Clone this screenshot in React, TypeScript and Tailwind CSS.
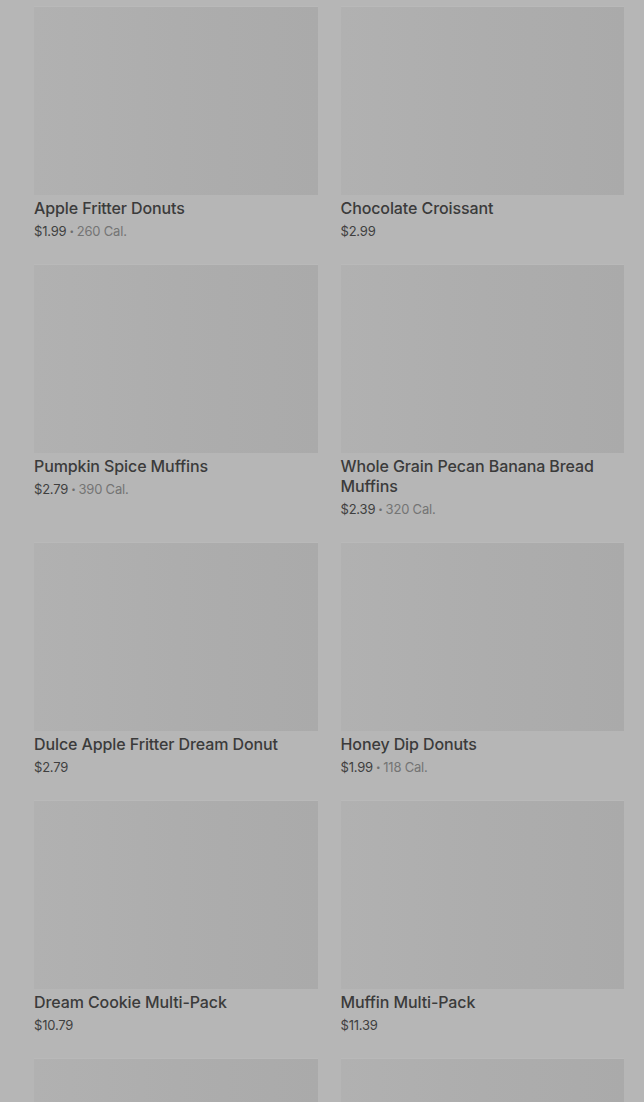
import React from "react";

type Item = { name?: string; price?: string; cal?: string };

const items: Item[] = [
  { name: "Apple Fritter Donuts", price: "$1.99", cal: "260 Cal." },
  { name: "Chocolate Croissant", price: "$2.99" },
  { name: "Pumpkin Spice Muffins", price: "$2.79", cal: "390 Cal." },
  { name: "Whole Grain Pecan Banana Bread Muffins", price: "$2.39", cal: "320 Cal." },
  { name: "Dulce Apple Fritter Dream Donut", price: "$2.79" },
  { name: "Honey Dip Donuts", price: "$1.99", cal: "118 Cal." },
  { name: "Dream Cookie Multi-Pack", price: "$10.79" },
  { name: "Muffin Multi-Pack", price: "$11.39" },
  {},
  {},
];

function Card({ item }: { item: Item }) {
  return (
    <div className="flex flex-col">
      <div className="h-[189px] w-full border-t border-[#b9b9b9] bg-gradient-to-r from-[#b1b1b1] via-[#adadad] to-[#aaaaaa]" />
      {item.name && (
        <div className="mt-[3px] text-[16px] leading-5 font-medium text-[#3b3b3b] tracking-[-0.1px]">
          {item.name}
        </div>
      )}
      {item.price && (
        <div className="mt-[3px] flex items-center text-[13px] leading-5 text-[#3f3f3f] tracking-[-0.2px]">
          <span>{item.price}</span>
          {item.cal && (
            <>
              <span className="mx-[3px] text-[8px] text-[#6e6e6e]">•</span>
              <span className="text-[#747474]">{item.cal}</span>
            </>
          )}
        </div>
      )}
    </div>
  );
}

export default function App() {
  return (
    <div
      className="h-[1102px] overflow-hidden bg-[#b6b6b6] pl-[34px] pr-[20px] pt-[6px]"
      style={{ fontFamily: "Inter, 'Noto Sans', sans-serif" }}
    >
      <div className="grid grid-cols-2 gap-x-[23px] gap-y-[23px]">
        {items.map((it, i) => (
          <Card key={i} item={it} />
        ))}
      </div>
    </div>
  );
}
